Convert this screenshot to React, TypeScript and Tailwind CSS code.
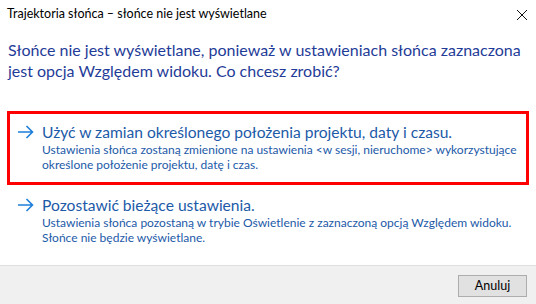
import React from "react";

const Arrow = () => (
  <svg width="17" height="14" viewBox="0 0 17 14" className="shrink-0">
    <path d="M1 7 H15.5 M9.5 1 L15.5 7 L9.5 13" fill="none" stroke="#1e7fd8" strokeWidth="1.6" />
  </svg>
);

export default function App() {
  return (
    <div
      className="w-[536px] h-[304px] bg-white flex flex-col overflow-hidden"
      style={{ fontFamily: 'Lato, "Noto Sans", sans-serif' }}
    >
      <div className="h-[29px] flex items-center justify-between pl-[7px] pr-[8px]">
        <span className="text-[12.5px] text-black leading-none whitespace-nowrap">
          Trajektoria słońca – słońce nie jest wyświetlane
        </span>
        <svg width="12" height="12" viewBox="0 0 12 12">
          <path d="M1 1 L11 11 M11 1 L1 11" stroke="#111" strokeWidth="1" />
        </svg>
      </div>
      <div className="pl-[8px] pt-[10px] text-[16px] leading-[21px] text-[#1f3c98] whitespace-nowrap">
        Słońce nie jest wyświetlane, ponieważ w ustawieniach słońca zaznaczona
        <br />
        jest opcja Względem widoku. Co chcesz zrobić?
      </div>
      <div className="mt-[30px] mx-[7px] w-[522px] border-[3px] border-[#ff0000] pt-[8px] pb-[10px] pl-[7px] flex items-start gap-[8px]">
        <div className="pt-[3px]">
          <Arrow />
        </div>
        <div className="flex flex-col">
          <div className="text-[15.6px] leading-[20px] text-[#1c5aa8] whitespace-nowrap">
            Użyć w zamian określonego położenia projektu, daty i czasu.
          </div>
          <div className="text-[12px] leading-[15px] text-[#1c5aa8] whitespace-nowrap">
            Ustawienia słońca zostaną zmienione na ustawienia &lt;w sesji, nieruchome&gt; wykorzystujące
            <br />
            określone położenie projektu, datę i czas.
          </div>
        </div>
      </div>
      <div className="mx-[7px] pt-[10px] pl-[10px] flex items-start gap-[8px]">
        <div className="pt-[3px]">
          <Arrow />
        </div>
        <div className="flex flex-col">
          <div className="text-[15.6px] leading-[20px] text-[#1c5aa8] whitespace-nowrap">
            Pozostawić bieżące ustawienia.
          </div>
          <div className="text-[12px] leading-[15px] text-[#1c5aa8] whitespace-nowrap">
            Ustawienia słońca pozostaną w trybie Oświetlenie z zaznaczoną opcją Względem widoku.
            <br />
            Słońce nie będzie wyświetlane.
          </div>
        </div>
      </div>
      <div className="flex-1" />
      <div className="h-[39px] bg-[#f0f0f0] border-t border-[#dfdfdf] flex items-start justify-end pt-[9px] pr-[9px]">
        <button className="w-[69px] h-[22px] bg-[#e1e1e1] border border-[#adadad] text-[12.5px] text-black leading-none">
          Anuluj
        </button>
      </div>
    </div>
  );
}
